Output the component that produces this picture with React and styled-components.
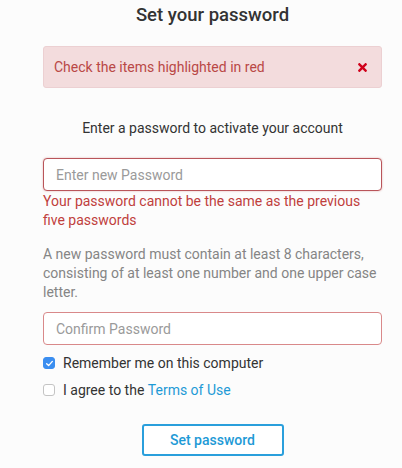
import React from 'react'
import styled, { createGlobalStyle } from 'styled-components'
import { FaTimes } from 'react-icons/fa'

const GlobalStyle = createGlobalStyle`
  html, body {
    margin: 0;
    padding: 0;
    background: #fcfcfc;
  }
  body {
    font-family: Roboto, "Liberation Sans", sans-serif;
    color: #333;
  }
`

const App = () => {
  return <Page>
    <GlobalStyle />
    <Form>
      <Title>Set your password</Title>
      <Alert>
        <span>Check the items highlighted in red</span>
        <CloseBtn><FaTimes /></CloseBtn>
      </Alert>
      <Subtitle>Enter a password to activate your account</Subtitle>
      <Input type='password' placeholder='Enter new Password' $error />
      <ErrorText>Your password cannot be the same as the previous five passwords</ErrorText>
      <Hint>A new password must contain at least 8 characters, consisting of at least one number and one upper case letter.</Hint>
      <Input type='password' placeholder='Confirm Password' $error $soft />
      <Checks>
        <CheckRow>
          <Box $checked>
            <svg viewBox='0 0 12 12' width='9' height='9'>
              <path d='M2.2 6.3 L4.8 8.8 L9.8 3.2' fill='none' stroke='#fff' strokeWidth='1.8' strokeLinecap='round' strokeLinejoin='round' />
            </svg>
          </Box>
          Remember me on this computer
        </CheckRow>
        <CheckRow>
          <Box />
          I agree to the&nbsp;<TermsLink>Terms of Use</TermsLink>
        </CheckRow>
      </Checks>
      <Submit>Set password</Submit>
    </Form>
  </Page>
}

const Page = styled.div`
  width: 402px;
  height: 468px;
  overflow: hidden;
`

const Form = styled.div`
  width: 339px;
  margin-left: 43px;
  display: flex;
  flex-direction: column;
`

const Title = styled.h1`
  margin: 4px 0 0;
  font-size: 18.5px;
  font-weight: 500;
  line-height: 22px;
  text-align: center;
  color: #333;
`

const Alert = styled.div`
  margin-top: 20px;
  height: 42px;
  box-sizing: border-box;
  display: flex;
  align-items: center;
  justify-content: space-between;
  padding: 0 12px 0 10px;
  background: #f3dcdd;
  border: 1px solid #ecd0d2;
  border-radius: 3px;
  color: #b94846;
  font-size: 14px;
`

const CloseBtn = styled.span`
  display: flex;
  color: #d0021b;
  font-size: 13px;
`

const Subtitle = styled.p`
  margin: 30px 0 0;
  font-size: 14px;
  line-height: 20px;
  text-align: center;
  color: #333;
`

const Input = styled.input`
  margin-top: ${p => p.$soft ? '10px' : '20px'};
  height: 33px;
  box-sizing: border-box;
  width: 100%;
  padding: 0 12px;
  border: 1px solid ${p => p.$error ? (p.$soft ? '#d9898a' : '#b9555a') : '#ccc'};
  border-radius: 4px;
  background: #fff;
  box-shadow: ${p => p.$soft ? 'none' : '0 0 2px rgba(185, 74, 72, 0.45)'};
  font-family: inherit;
  font-size: 14px;
  color: #333;
  outline: none;
  &::placeholder {
    color: #9a9a9a;
  }
`

const ErrorText = styled.p`
  margin: 0;
  padding-top: 1px;
  font-size: 14px;
  line-height: 19px;
  color: #c0403c;
`

const Hint = styled.p`
  margin: 15px 0 0;
  font-size: 14px;
  line-height: 19px;
  color: #858585;
`

const Checks = styled.div`
  margin-top: 8px;
  display: flex;
  flex-direction: column;
  gap: 7px;
`

const CheckRow = styled.label`
  display: flex;
  align-items: center;
  height: 20px;
  font-size: 14px;
  color: #333;
`

const Box = styled.span`
  width: 12px;
  height: 12px;
  box-sizing: border-box;
  margin-right: 8px;
  border-radius: 3px;
  display: flex;
  align-items: center;
  justify-content: center;
  background: ${p => p.$checked ? '#3b8ef0' : '#fff'};
  border: 1px solid ${p => p.$checked ? '#3b8ef0' : '#c4c4c4'};
`

const TermsLink = styled.a`
  color: #1e9ad6;
  text-decoration: none;
`

const Submit = styled.button`
  align-self: center;
  margin-top: 24px;
  width: 142px;
  height: 32px;
  border: 2px solid #2a9fdc;
  border-radius: 3px;
  background: #fff;
  color: #1e9ad6;
  font-family: inherit;
  font-size: 14px;
  font-weight: 500;
  cursor: pointer;
`

export default App
